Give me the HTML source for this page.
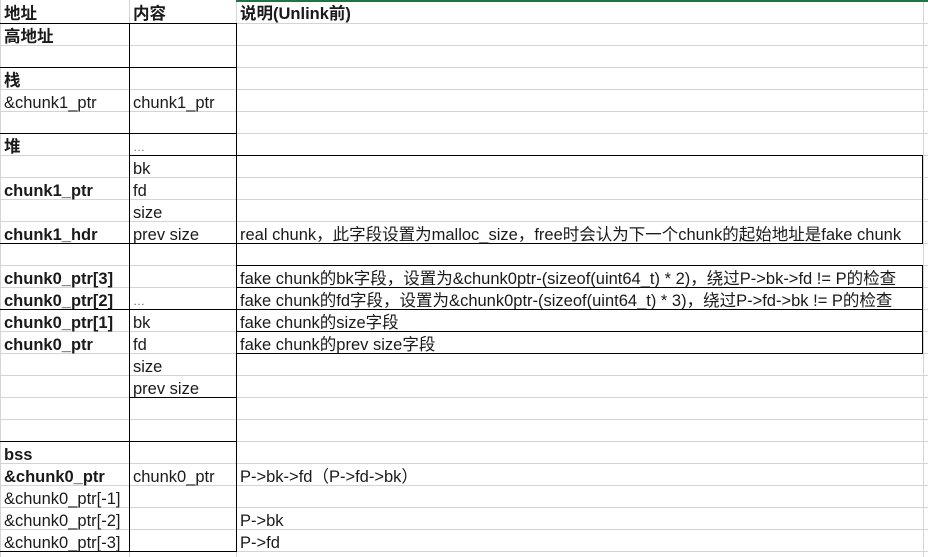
<!DOCTYPE html>
<html><head><meta charset="utf-8"><style>
body{margin:0;width:928px;height:557px;background:#fff;position:relative;overflow:hidden;font-family:"Liberation Sans","Noto Sans CJK SC",sans-serif;font-size:16.5px;color:#1a1a1a}
.h{position:absolute;height:1px;background:#d4d4d4}
.v{position:absolute;width:1px;background:#d4d4d4}
.bh{position:absolute;height:1px;background:#000}
.bv{position:absolute;width:1px;background:#000}
.t{position:absolute;white-space:nowrap;line-height:22px;height:22px;margin-top:2px}
b{font-weight:bold}
</style></head><body>
<div class="h" style="left:0;width:928px;top:23px"></div>
<div class="h" style="left:0;width:928px;top:45px"></div>
<div class="h" style="left:0;width:928px;top:67px"></div>
<div class="h" style="left:0;width:928px;top:89px"></div>
<div class="h" style="left:0;width:928px;top:111px"></div>
<div class="h" style="left:0;width:928px;top:133px"></div>
<div class="h" style="left:0;width:928px;top:155px"></div>
<div class="h" style="left:0;width:928px;top:177px"></div>
<div class="h" style="left:0;width:928px;top:199px"></div>
<div class="h" style="left:0;width:928px;top:221px"></div>
<div class="h" style="left:0;width:928px;top:243px"></div>
<div class="h" style="left:0;width:928px;top:265px"></div>
<div class="h" style="left:0;width:928px;top:287px"></div>
<div class="h" style="left:0;width:928px;top:309px"></div>
<div class="h" style="left:0;width:928px;top:331px"></div>
<div class="h" style="left:0;width:928px;top:353px"></div>
<div class="h" style="left:0;width:928px;top:375px"></div>
<div class="h" style="left:0;width:928px;top:397px"></div>
<div class="h" style="left:0;width:928px;top:419px"></div>
<div class="h" style="left:0;width:928px;top:441px"></div>
<div class="h" style="left:0;width:928px;top:463px"></div>
<div class="h" style="left:0;width:928px;top:485px"></div>
<div class="h" style="left:0;width:928px;top:507px"></div>
<div class="h" style="left:0;width:928px;top:529px"></div>
<div class="h" style="left:0;width:928px;top:551px"></div>
<div class="v" style="left:0;top:0;height:557px"></div>
<div class="v" style="left:129px;top:0;height:557px"></div>
<div class="v" style="left:236px;top:0;height:557px"></div>
<div class="v" style="left:923px;top:0;height:557px"></div>
<div style="position:absolute;left:236px;top:0;width:692px;height:2px;background:#217346"></div>
<div class="bv" style="left:129px;top:23px;height:529px"></div>
<div class="bv" style="left:236px;top:23px;height:529px"></div>
<div class="bh" style="left:0;width:237px;top:23px"></div>
<div class="bh" style="left:0;width:237px;top:67px"></div>
<div class="bh" style="left:0;width:237px;top:133px"></div>
<div class="bh" style="left:129px;width:794px;top:155px"></div>
<div class="bh" style="left:0;width:923px;top:243px"></div>
<div class="bh" style="left:236px;width:687px;top:265px"></div>
<div class="bh" style="left:236px;width:687px;top:287px"></div>
<div class="bh" style="left:0;width:923px;top:309px"></div>
<div class="bh" style="left:236px;width:687px;top:331px"></div>
<div class="bh" style="left:236px;width:687px;top:353px"></div>
<div class="bh" style="left:129px;width:108px;top:397px"></div>
<div class="bh" style="left:0;width:237px;top:441px"></div>
<div class="bh" style="left:0;width:237px;top:551px"></div>
<div class="bv" style="left:922px;top:155px;height:89px"></div>
<div class="bv" style="left:922px;top:265px;height:89px"></div>
<div class="t" style="left:4px;top:1px"><b>地址</b></div>
<div class="t" style="left:133px;top:1px"><b>内容</b></div>
<div class="t" style="left:240px;top:1px"><b>说明(Unlink前)</b></div>
<div class="t" style="left:4px;top:24px"><b>高地址</b></div>
<div class="t" style="left:4px;top:68px"><b>栈</b></div>
<div class="t" style="left:4px;top:90px">&amp;chunk1_ptr</div>
<div class="t" style="left:133px;top:90px">chunk1_ptr</div>
<div class="t" style="left:4px;top:134px"><b>堆</b></div>
<div class="t" style="left:133px;top:134px;color:#666;font-size:12px">…</div>
<div class="t" style="left:133px;top:156px">bk</div>
<div class="t" style="left:4px;top:178px"><b>chunk1_ptr</b></div>
<div class="t" style="left:133px;top:178px">fd</div>
<div class="t" style="left:133px;top:200px">size</div>
<div class="t" style="left:4px;top:222px"><b>chunk1_hdr</b></div>
<div class="t" style="left:133px;top:222px">prev size</div>
<div class="t" style="left:240px;top:222px">real chunk，此字段设置为malloc_size，free时会认为下一个chunk的起始地址是fake chunk</div>
<div class="t" style="left:4px;top:266px"><b>chunk0_ptr[3]</b></div>
<div class="t" style="left:240px;top:266px">fake chunk的bk字段，设置为&amp;chunk0ptr-(sizeof(uint64_t) * 2)，绕过P-&gt;bk-&gt;fd != P的检查</div>
<div class="t" style="left:4px;top:288px"><b>chunk0_ptr[2]</b></div>
<div class="t" style="left:133px;top:288px;color:#666;font-size:12px">…</div>
<div class="t" style="left:240px;top:288px">fake chunk的fd字段，设置为&amp;chunk0ptr-(sizeof(uint64_t) * 3)，绕过P-&gt;fd-&gt;bk != P的检查</div>
<div class="t" style="left:4px;top:310px"><b>chunk0_ptr[1]</b></div>
<div class="t" style="left:133px;top:310px">bk</div>
<div class="t" style="left:240px;top:310px">fake chunk的size字段</div>
<div class="t" style="left:4px;top:332px"><b>chunk0_ptr</b></div>
<div class="t" style="left:133px;top:332px">fd</div>
<div class="t" style="left:240px;top:332px">fake chunk的prev size字段</div>
<div class="t" style="left:133px;top:354px">size</div>
<div class="t" style="left:133px;top:376px">prev size</div>
<div class="t" style="left:4px;top:442px"><b>bss</b></div>
<div class="t" style="left:4px;top:464px"><b>&amp;chunk0_ptr</b></div>
<div class="t" style="left:133px;top:464px">chunk0_ptr</div>
<div class="t" style="left:240px;top:464px">P-&gt;bk-&gt;fd（P-&gt;fd-&gt;bk）</div>
<div class="t" style="left:4px;top:486px">&amp;chunk0_ptr[-1]</div>
<div class="t" style="left:4px;top:508px">&amp;chunk0_ptr[-2]</div>
<div class="t" style="left:240px;top:508px">P-&gt;bk</div>
<div class="t" style="left:4px;top:530px">&amp;chunk0_ptr[-3]</div>
<div class="t" style="left:240px;top:530px">P-&gt;fd</div>
</body></html>
